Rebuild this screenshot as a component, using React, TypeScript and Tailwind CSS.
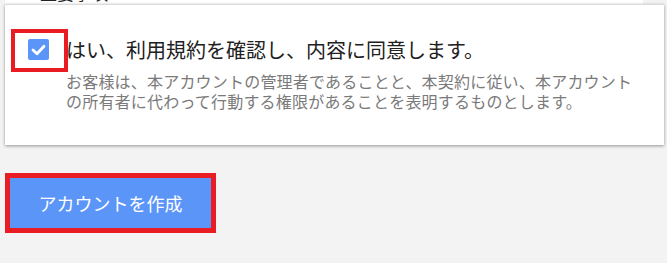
import React from 'react';

const FONT = { fontFamily: '"Noto Sans CJK JP", "Noto Sans", sans-serif' };

const CheckBox = () => (
    <div className="relative mt-[2px] h-[21px] w-[21px] shrink-0">
        <div className="flex h-[21px] w-[21px] items-center justify-center rounded-[2px] bg-[#5b95f7]">
            <svg width="21" height="21" viewBox="0 0 21 21" fill="none">
                <polyline points="5,11 9,14.8 16,7.2" stroke="#fff" strokeWidth="2.8" strokeLinecap="round" strokeLinejoin="round" />
            </svg>
        </div>
        {/* red annotation frame */}
        <span className="pointer-events-none absolute left-[-17px] top-[-10px] h-[43px] w-[57px] border-[4px] border-[#e91c24]" />
    </div>
);

export default function App() {
    return (
        <div className="h-[263px] w-[667px] overflow-hidden bg-[#f3f3f3]" style={FONT}>
            {/* bottom of the section above, cut off */}
            <div className="ml-[5px] h-[4px] w-[638px] overflow-hidden bg-white">
                <p className="ml-[18px] mt-[-17px] text-[17px] leading-[20px] text-[#222]">※重要事項</p>
            </div>

            <div className="ml-[5px] w-[659px] border-t border-[#dcdcdc] bg-white pb-[34px] pl-[23px] pr-[20px] pt-[32px] shadow-[0_1px_3px_rgba(0,0,0,0.4)]">
                <div className="flex items-start gap-[17px]">
                    <CheckBox />
                    <div>
                        <p className="text-[20px] leading-[26px] text-[#212121]">はい、利用規約を確認し、内容に同意します。</p>
                        <p className="mt-[8px] text-[16px] leading-[20px] tracking-[0.2px] text-[#7a7a7a] whitespace-nowrap">
                            お客様は、本アカウントの管理者であることと、本契約に従い、本アカウント
                            <br />
                            の所有者に代わって行動する権限があることを表明するものとします。
                        </p>
                    </div>
                </div>
            </div>

            <div className="ml-[10px] mt-[33px] w-fit">
                <button className="relative flex h-[50px] w-[201px] items-center justify-center bg-[#5b95f7] text-[18px] text-white shadow-[0_1px_1px_rgba(0,0,0,0.35)]">
                    アカウントを作成
                    <span className="pointer-events-none absolute inset-[-5px] border-[5px] border-[#e91c24]" />
                </button>
            </div>
        </div>
    );
}
